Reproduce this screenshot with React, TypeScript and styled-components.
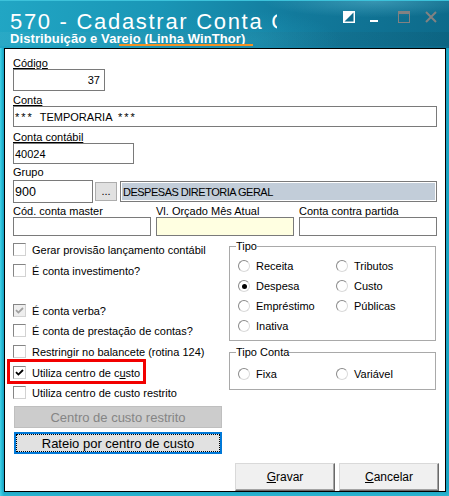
import React from "react";
import styled, { createGlobalStyle } from "styled-components";

const GlobalStyle = createGlobalStyle`
  html, body { margin: 0; padding: 0; background: #ffffff; }
  body { font-family: "Liberation Sans", Arial, sans-serif; font-size: 11px; color: #000; }
  *, *::before, *::after { box-sizing: border-box; }
`;

const Window = styled.div`
  width: 449px;
  height: 496px;
  display: flex;
  flex-direction: column;
  padding: 0 3px 4px 4px;
  overflow: hidden;
  background:
    linear-gradient(180deg, rgba(0, 0, 0, 0) 0px, rgba(0, 0, 0, 0) 488px, rgba(80, 220, 240, 0.35) 496px),
    linear-gradient(90deg, #44d0e6 0px, #26bad5 2px, #189fbf 4px, #189fbf 446px, #1aa9c6 449px);
`;

const TitleBar = styled.div`
  height: 48px;
  margin: 0 -3px 0 -4px;
  display: flex;
  flex-direction: column;
  border-top: 1px solid #3cc2da;
  background:
    radial-gradient(ellipse 150px 22px at 375px 0px, rgba(130, 215, 235, 0.35), transparent 75%),
    radial-gradient(ellipse 120px 40px at 250px 40px, rgba(40, 170, 200, 0.35), transparent 75%),
    linear-gradient(100deg, #21a6c4 0%, #1a96b6 35%, #127a9c 65%, #0d6a8a 100%);
`;

const TitleRow = styled.div`
  height: 31px;
  display: flex;
  align-items: flex-start;
  padding-left: 10px;
`;

const TitleText = styled.div`
  width: 267px;
  height: 30px;
  padding-top: 10px;
  overflow: hidden;
  white-space: nowrap;
  font-size: 22px;
  line-height: 21px;
  letter-spacing: 1.7px;
  color: #ffffff;
`;

const CaptionButton = styled.div<{ $ml: number }>`
  width: 12px;
  height: 12px;
  margin-top: 10px;
  margin-left: ${(p) => p.$ml}px;
  display: flex;
`;

const SubtitleRow = styled.div`
  position: relative;
  height: 14px;
  margin-bottom: 2px;
  padding-left: 10px;
  font-size: 13px;
  line-height: 14px;
  font-weight: bold;
  letter-spacing: 0.1px;
  color: #ffffff;
  white-space: nowrap;
  background: linear-gradient(90deg, rgba(255, 255, 255, 0.04), rgba(0, 0, 0, 0.06));
`;

const AccentLine = styled.span`
  position: absolute;
  left: 119px;
  top: 12px;
  width: 134px;
  height: 2px;
  background: #f5901f;
`;

const Client = styled.div`
  height: 444px;
  border: 1px solid #000;
  background: #ffffff;
  padding: 9px 8px 0 8px;
  display: flex;
  flex-direction: column;
`;

const FieldLabel = styled.div<{ $mt?: number; $underline?: boolean }>`
  height: 11px;
  line-height: 11px;
  font-size: 11px;
  white-space: nowrap;
  margin-top: ${(p) => p.$mt ?? 0}px;
  text-decoration: ${(p) => (p.$underline ? "underline" : "none")};
`;

const TextBox = styled.div<{ $w?: number; $h?: number; $align?: string; $bg?: string; $fs?: number }>`
  width: ${(p) => (p.$w ? `${p.$w}px` : "100%")};
  height: ${(p) => p.$h ?? 21}px;
  flex-shrink: 0;
  border: 1px solid #7a7a7a;
  background: ${(p) => p.$bg ?? "#ffffff"};
  display: flex;
  align-items: center;
  justify-content: ${(p) => p.$align ?? "flex-start"};
  padding: 0 4px 0 1px;
  font-size: ${(p) => p.$fs ?? 11}px;
  white-space: pre;
`;

const Stars = styled.span`
  letter-spacing: 2px;
`;

const GroupRow = styled.div`
  margin-top: 2px;
  height: 23px;
  display: flex;
  align-items: center;
`;

const EllipsisButton = styled.div`
  width: 22px;
  height: 19px;
  margin-left: 2px;
  background: #e1e1e1;
  border: 1px solid #adadad;
  display: flex;
  justify-content: center;
  align-items: flex-end;
  padding-bottom: 3px;
  font-size: 11px;
  line-height: 11px;
  color: #000;
`;

const DescriptionBox = styled.div`
  width: 317px;
  height: 21px;
  margin-left: 3px;
  border: 1px solid #7a7a7a;
  padding: 1px;
  display: flex;
`;

const DescriptionFill = styled.div`
  flex: 1;
  background: #c2cdd9;
  display: flex;
  align-items: center;
  padding-left: 1px;
  font-size: 11px;
  letter-spacing: -0.5px;
  white-space: nowrap;
`;

const TripleRow = styled.div`
  margin-top: 3px;
  display: grid;
  grid-template-columns: repeat(3, 138px);
  column-gap: 5px;
`;

const FieldColumn = styled.div`
  display: flex;
  flex-direction: column;
`;

const LowerSection = styled.div`
  margin-top: 7px;
  display: grid;
  grid-template-columns: 216px 207px;
  align-items: start;
`;

const LeftColumn = styled.div`
  display: flex;
  flex-direction: column;
`;

const RightColumn = styled.div`
  display: flex;
  flex-direction: column;
`;

const CheckRow = styled.div<{ $mt?: number }>`
  position: relative;
  height: 13px;
  margin-top: ${(p) => p.$mt ?? 0}px;
  display: flex;
  align-items: center;
  gap: 6px;
`;

const CheckBox = styled.div<{ $disabled?: boolean }>`
  width: 13px;
  height: 13px;
  flex-shrink: 0;
  border: 1px solid;
  border-color: #858585 #d2d2d2 #d2d2d2 #858585;
  background: ${(p) => (p.$disabled ? "#eeeeee" : "#ffffff")};
  display: flex;
  align-items: center;
  justify-content: center;
`;

const CheckText = styled.span`
  font-size: 11px;
  line-height: 13px;
  padding-top: 1px;
  white-space: nowrap;
`;

const Highlight = styled.div`
  position: absolute;
  left: -6px;
  top: -7px;
  width: 139px;
  height: 25px;
  border: 3px solid #f20000;
  pointer-events: none;
`;

const GroupBox = styled.div<{ $mt: number; $h: number }>`
  position: relative;
  width: 207px;
  height: ${(p) => p.$h}px;
  margin-top: ${(p) => p.$mt}px;
  border: 1px solid #a9a9a9;
`;

const GroupCaption = styled.span`
  position: absolute;
  left: 6px;
  top: -6px;
  background: #ffffff;
  font-size: 11px;
  line-height: 11px;
  white-space: nowrap;
`;

const RadioGrid = styled.div<{ $pt: number }>`
  display: grid;
  grid-template-columns: 98px 98px;
  grid-auto-rows: 12px;
  row-gap: 8px;
  padding: ${(p) => p.$pt}px 0 0 8px;
`;

const RadioItem = styled.div`
  display: flex;
  align-items: center;
  gap: 6px;
  font-size: 11px;
  line-height: 12px;
  white-space: nowrap;
`;

const RadioCircle = styled.div<{ $checked?: boolean }>`
  width: 12px;
  height: 12px;
  flex-shrink: 0;
  border-radius: 50%;
  border: 1px solid;
  border-color: #8a8a8a #dadada #dadada #8a8a8a;
  background: #ffffff;
  display: flex;
  align-items: center;
  justify-content: center;
  &::after {
    content: "";
    display: ${(p) => (p.$checked ? "block" : "none")};
    width: 5px;
    height: 5px;
    border-radius: 50%;
    background: #000;
  }
`;

const DisabledButton = styled.div`
  width: 208px;
  height: 22px;
  margin: 7px 0 0 1px;
  background: #cccccc;
  border: 1px solid #bfbfbf;
  color: #858585;
  font-size: 13px;
  display: flex;
  align-items: center;
  justify-content: center;
  white-space: nowrap;
`;

const FocusButton = styled.div`
  width: 208px;
  height: 22px;
  margin: 4px 0 0 1px;
  background: #e1e1e1;
  border: 2px solid #0078d7;
  display: flex;
`;

const FocusInner = styled.div`
  flex: 1;
  border: 1px dotted #000;
  display: flex;
  align-items: center;
  justify-content: center;
  font-size: 13px;
  white-space: nowrap;
`;

const Footer = styled.div`
  margin: 9px -2px 0 0;
  display: flex;
  justify-content: flex-end;
  gap: 4px;
`;

const DialogButton = styled.div`
  width: 100px;
  height: 28px;
  background: #f0f0f0;
  border: 1px solid;
  border-color: #d9d9d9 #696969 #696969 #d9d9d9;
  box-shadow: inset -1px -1px 0 #a3a3a3;
  display: flex;
  align-items: center;
  justify-content: center;
  font-size: 12px;
`;

const CheckMark = ({ color }: { color: string }) => (
  <svg width="9" height="9" viewBox="0 0 9 9">
    <path d="M1 4.2 L3.4 6.6 L8 2" fill="none" stroke={color} strokeWidth="1.8" />
  </svg>
);

type CheckProps = {
  label: React.ReactNode;
  mt?: number;
  checked?: boolean;
  disabled?: boolean;
  highlight?: boolean;
};

const Check = ({ label, mt, checked, disabled, highlight }: CheckProps) => (
  <CheckRow $mt={mt}>
    <CheckBox $disabled={disabled}>{checked && <CheckMark color={disabled ? "#a0a0a0" : "#000"} />}</CheckBox>
    <CheckText>{label}</CheckText>
    {highlight && <Highlight />}
  </CheckRow>
);

const Radio = ({ label, checked }: { label: string; checked?: boolean }) => (
  <RadioItem>
    <RadioCircle $checked={checked} />
    <span>{label}</span>
  </RadioItem>
);

export default function App() {
  return (
    <>
      <GlobalStyle />
      <Window>
        <TitleBar>
          <TitleRow>
            <TitleText>570 - Cadastrar Conta Contábil</TitleText>
            <CaptionButton $ml={66}>
              <svg width="12" height="12" viewBox="0 0 12 12">
                <rect x="0" y="0" width="12" height="12" fill="#ffffff" />
                <polygon points="10.5,1.5 10.5,10.5 1.5,10.5" fill="#0f6b8b" />
              </svg>
            </CaptionButton>
            <CaptionButton $ml={13}>
              <svg width="12" height="12" viewBox="0 0 12 12">
                <rect x="2" y="9" width="8" height="2" fill="#ffffff" />
              </svg>
            </CaptionButton>
            <CaptionButton $ml={18}>
              <svg width="12" height="12" viewBox="0 0 12 12">
                <rect x="0.5" y="0.5" width="11" height="11" fill="none" stroke="#828282" />
                <rect x="0" y="0" width="12" height="3" fill="#828282" />
              </svg>
            </CaptionButton>
            <CaptionButton $ml={15}>
              <svg width="12" height="12" viewBox="0 0 12 12">
                <path d="M1 1 L11 11 M11 1 L1 11" stroke="#828282" strokeWidth="2" />
              </svg>
            </CaptionButton>
          </TitleRow>
          <SubtitleRow>
            Distribuição e Varejo (Linha WinThor)
            <AccentLine />
          </SubtitleRow>
        </TitleBar>
        <Client>
          <FieldLabel $underline>Código</FieldLabel>
          <TextBox $w={92} $h={22} $align="flex-end">
            37
          </TextBox>
          <FieldLabel $mt={4} $underline>
            Conta
          </FieldLabel>
          <TextBox>
            <span>
              <Stars>***</Stars>
              {"  TEMPORARIA  "}
              <Stars>***</Stars>
            </span>
          </TextBox>
          <FieldLabel $mt={5} $underline>
            Conta contábil
          </FieldLabel>
          <TextBox $w={121}>40024</TextBox>
          <FieldLabel $mt={3}>Grupo</FieldLabel>
          <GroupRow>
            <TextBox $w={80} $h={23} $fs={12.5}>
              900
            </TextBox>
            <EllipsisButton>...</EllipsisButton>
            <DescriptionBox>
              <DescriptionFill>DESPESAS DIRETORIA GERAL</DescriptionFill>
            </DescriptionBox>
          </GroupRow>
          <TripleRow>
            <FieldColumn>
              <FieldLabel>Cód. conta master</FieldLabel>
              <TextBox $h={19} />
            </FieldColumn>
            <FieldColumn>
              <FieldLabel>Vl. Orçado Mês Atual</FieldLabel>
              <TextBox $h={19} $bg="#ffffe1" />
            </FieldColumn>
            <FieldColumn>
              <FieldLabel>Conta contra partida</FieldLabel>
              <TextBox $h={19} />
            </FieldColumn>
          </TripleRow>
          <LowerSection>
            <LeftColumn>
              <Check label="Gerar provisão lançamento contábil" />
              <Check label="É conta investimento?" mt={8} />
              <Check label="É conta verba?" mt={27} checked disabled />
              <Check label="É conta de prestação de contas?" mt={7} />
              <Check label="Restringir no balancete (rotina 124)" mt={8} />
              <Check
                label={
                  <>
                    Utiliza centro de c<u>u</u>sto
                  </>
                }
                mt={8}
                checked
                highlight
              />
              <Check label="Utiliza centro de custo restrito" mt={7} />
              <DisabledButton>Centro de custo restrito</DisabledButton>
              <FocusButton>
                <FocusInner>Rateio por centro de custo</FocusInner>
              </FocusButton>
            </LeftColumn>
            <RightColumn>
              <GroupBox $mt={3} $h={95}>
                <GroupCaption>Tipo</GroupCaption>
                <RadioGrid $pt={13}>
                  <Radio label="Receita" />
                  <Radio label="Tributos" />
                  <Radio label="Despesa" checked />
                  <Radio label="Custo" />
                  <Radio label="Empréstimo" />
                  <Radio label="Públicas" />
                  <Radio label="Inativa" />
                </RadioGrid>
              </GroupBox>
              <GroupBox $mt={11} $h={38}>
                <GroupCaption>Tipo Conta</GroupCaption>
                <RadioGrid $pt={15}>
                  <Radio label="Fixa" />
                  <Radio label="Variável" />
                </RadioGrid>
              </GroupBox>
            </RightColumn>
          </LowerSection>
          <Footer>
            <DialogButton>
              <span>
                <u>G</u>ravar
              </span>
            </DialogButton>
            <DialogButton>
              <span>
                <u>C</u>ancelar
              </span>
            </DialogButton>
          </Footer>
        </Client>
      </Window>
    </>
  );
}
